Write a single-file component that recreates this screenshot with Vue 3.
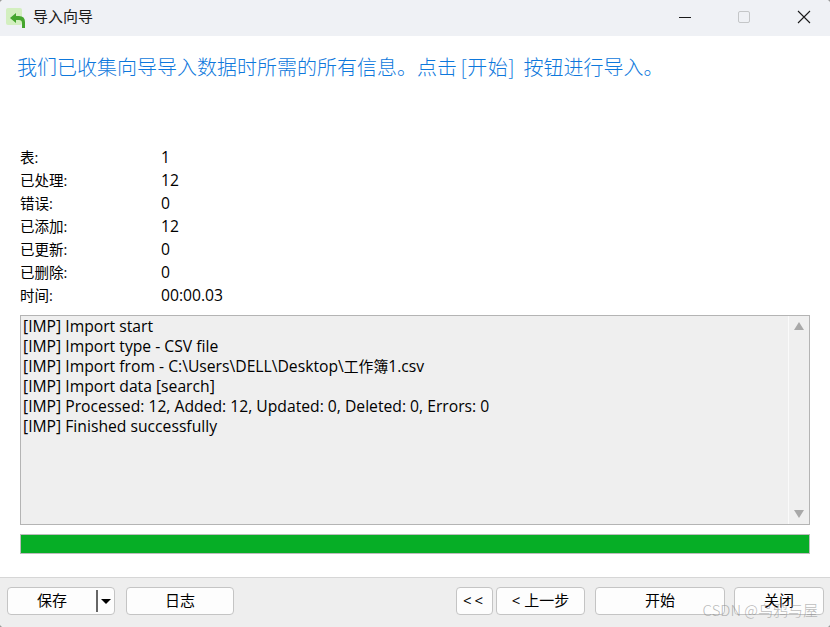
<script setup>
const stats = [
  ['表:', '1'],
  ['已处理:', '12'],
  ['错误:', '0'],
  ['已添加:', '12'],
  ['已更新:', '0'],
  ['已删除:', '0'],
  ['时间:', '00:00.03'],
]
const logs = [
  { text: '[IMP] Import start' },
  { text: '[IMP] Import type - CSV file' },
  { text: '[IMP] Import from - C:\\Users\\DELL\\Desktop\\', cjk: '工作簿', tail: '1.csv' },
  { text: '[IMP] Import data [search]' },
  { text: '[IMP] Processed: 12, Added: 12, Updated: 0, Deleted: 0, Errors: 0' },
  { text: '[IMP] Finished successfully' },
]
</script>

<template>
  <div class="win">
    <header class="titlebar">
      <svg class="appicon" width="21" height="21" viewBox="0 0 21 21">
        <rect x="0" y="0" width="16" height="17" rx="2" fill="#d3efc0" />
        <path d="M4 10 L10 5 V8 H13 Q19 8 19 14 V20 H16 V15 Q16 12 13 12 H10 V15 Z" fill="#45a62e" />
      </svg>
      <span class="wintitle">导入向导</span>
      <div class="controls">
        <svg width="14" height="14" viewBox="0 0 14 14" class="c-min"><path d="M1 7.5H13" stroke="#1a1a1a" stroke-width="1" /></svg>
        <svg width="14" height="14" viewBox="0 0 14 14" class="c-max"><rect x="1.5" y="1.5" width="11" height="11" rx="1.5" fill="none" stroke="#c4c6c8" /></svg>
        <svg width="14" height="14" viewBox="0 0 14 14" class="c-close"><path d="M1 1L13 13M13 1L1 13" stroke="#1a1a1a" stroke-width="1.1" /></svg>
      </div>
    </header>

    <main class="content">
      <h1 class="heading">我们已收集向导导入数据时所需的所有信息。点击 <span class="bracket">[开始]</span> 按钮进行导入。</h1>

      <dl class="stats">
        <div v-for="s in stats" :key="s[0]" class="stat">
          <dt>{{ s[0] }}</dt>
          <dd>{{ s[1] }}</dd>
        </div>
      </dl>

      <div class="logbox">
        <div class="loglines">
          <div v-for="l in logs" :key="l.text">{{ l.text }}<span v-if="l.cjk" class="cjk">{{ l.cjk }}</span>{{ l.tail }}</div>
        </div>
        <div class="scroll">
          <span class="arrow up"></span>
          <span class="arrow down"></span>
        </div>
      </div>

      <div class="progress"><div class="fill"></div></div>
    </main>

    <footer class="footer">
      <div class="left">
        <button class="btn save">
          <span class="savelabel">保存</span>
          <span class="sep"></span>
          <span class="caret"></span>
        </button>
        <button class="btn log">日志</button>
      </div>
      <div class="right">
        <button class="btn first">&lt;&lt;</button>
        <button class="btn prev">&lt; 上一步</button>
        <button class="btn start">开始</button>
        <button class="btn close">关闭</button>
      </div>
      <span class="watermark">CSDN @乌鸦与屋</span>
    </footer>
  </div>
</template>

<style>
body { background: #9a9a9a; }
</style>

<style scoped>
.win {
  width: 830px;
  height: 627px;
  display: flex;
  flex-direction: column;
  background: #fff;
  overflow: hidden;
  border-radius: 4px;
  font-family: "Open Sans", "Noto Sans CJK SC", sans-serif;
  font-size: 14px;
  color: #000;
}
.titlebar {
  height: 36px;
  flex: none;
  box-sizing: border-box;
  background: #eff1f5;
  display: flex;
  align-items: center;
  padding: 0 0 2px 6px;
}
.appicon { margin-right: 6px; margin-top: 3px; }
.wintitle {
  font-size: 15px;
  line-height: 20px;
  margin-bottom: 2px;
  color: #1a1a1a;
  font-family: "Noto Sans CJK SC", sans-serif;
}
.controls {
  margin-left: auto;
  display: flex;
  align-items: center;
  padding-right: 19px;
}
.c-min { margin-right: 45px; }
.c-max { margin-right: 46px; }
.content {
  flex: 1;
  padding: 0 20px;
  min-height: 0;
  display: flex;
  flex-direction: column;
}
.heading {
  margin: 17px 0 0 -3px;
  height: 28px;
  font-size: 20px;
  line-height: 28px;
  font-weight: 300;
  color: #0e78dc;
  font-family: "Noto Sans CJK SC", sans-serif;
  white-space: nowrap;
}
.bracket { margin: 0 4px 0 -1px; letter-spacing: 0.5px; }
.stats { margin: 64px 0 0; }
.stat { display: flex; height: 23px; align-items: center; }
.stat dt { width: 141px; font-size: 14.5px; }
.stat dd { margin: 0; font-size: 15.7px; }
.logbox {
  margin-top: 9px;
  height: 210px;
  width: 790px;
  box-sizing: border-box;
  border: 1px solid #b4b4b4;
  background: #efefef;
  display: flex;
}
.loglines {
  flex: 1;
  padding: 0 2px;
  font-size: 15.7px;
  line-height: 20px;
  white-space: nowrap;
}
.cjk { font-size: 14.8px; }
.scroll {
  width: 20px;
  flex: none;
  border-left: 1px solid #fafafa;
  position: relative;
}
.arrow {
  position: absolute;
  left: 5px;
  width: 0;
  height: 0;
  border-left: 5px solid transparent;
  border-right: 5px solid transparent;
}
.arrow.up { top: 6px; border-bottom: 8px solid #a8a8a8; }
.arrow.down { bottom: 6px; border-top: 8px solid #a8a8a8; }
.progress {
  margin-top: 9px;
  height: 20px;
  width: 790px;
  box-sizing: border-box;
  border: 1px solid #bcbcbc;
}
.fill { height: 100%; background: #06ae26; }
.footer {
  height: 50px;
  flex: none;
  box-sizing: border-box;
  background: #eeeeee;
  border-top: 1px solid #d6d6d6;
  padding: 9px 6px 0 7px;
  display: flex;
  justify-content: space-between;
  align-items: flex-start;
  position: relative;
}
.left, .right { display: flex; }
.left { gap: 11px; }
.btn {
  height: 28px;
  box-sizing: border-box;
  border: 1px solid #c4c4c4;
  border-radius: 4px;
  background: #fdfdfd;
  font: 15px/24px "Open Sans", "Noto Sans CJK SC", sans-serif;
  color: #000;
  padding: 0 0 2px;
}
.save {
  width: 108px;
  display: flex;
  align-items: center;
  position: relative;
  padding: 0;
}
.savelabel { width: 88px; text-align: center; margin-bottom: 2px; }
.sep { width: 2px; height: 22px; background: #666; }
.caret {
  margin-left: 3px;
  width: 0;
  height: 0;
  border-left: 5px solid transparent;
  border-right: 5px solid transparent;
  border-top: 5px solid #000;
  margin-top: 1px;
}
.log { width: 108px; }
.first { width: 37px; margin-right: 3px; letter-spacing: 3px; }
.prev { width: 89px; margin-right: 10px; }
.start { width: 130px; margin-right: 9px; }
.close { width: 90px; }
.watermark {
  position: absolute;
  right: 12px;
  top: 21px;
  font-size: 15px;
  color: rgba(130, 130, 130, 0.55);
  font-family: "Noto Sans CJK SC", sans-serif;
  font-weight: 300;
  white-space: nowrap;
}
</style>
